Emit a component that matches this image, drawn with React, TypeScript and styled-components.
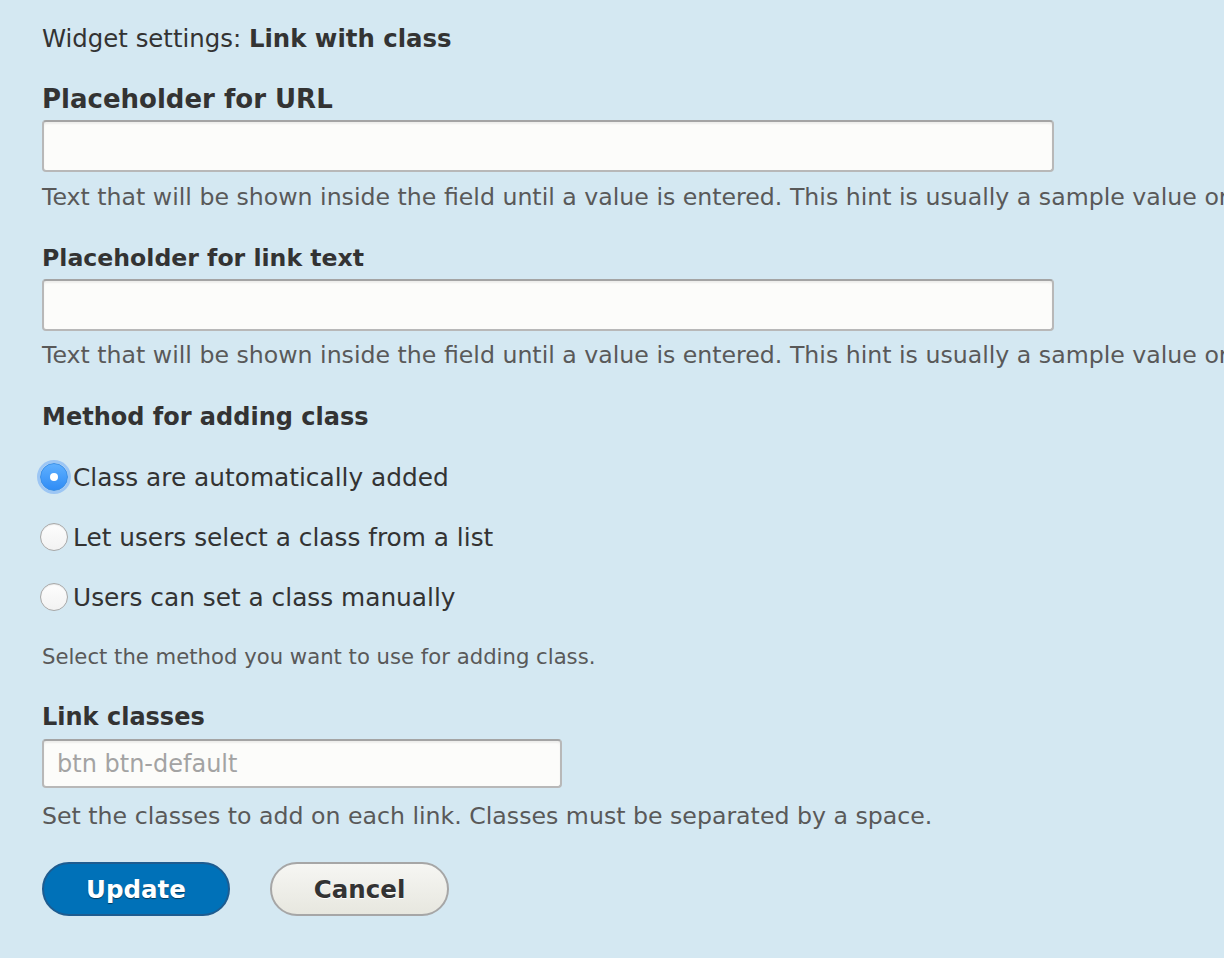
import React from "react";
import styled, { createGlobalStyle } from "styled-components";

const Global = createGlobalStyle`
  html, body { margin: 0; padding: 0; background: #d4e8f2; }
  body { font-family: "DejaVu Sans", Verdana, sans-serif; color: #333; }
  * { box-sizing: border-box; }
`;

const Page = styled.form`
  width: 1224px;
  height: 958px;
  overflow: hidden;
  background: #d4e8f2;
  padding: 24px 0 0 42px;
  display: flex;
  flex-direction: column;
`;

const Title = styled.div`
  font-size: 24.4px;
  line-height: 30px;
  white-space: nowrap;
  b { font-weight: bold; }
`;

const Item = styled.div<{ $mt: number }>`
  margin-top: ${(p) => p.$mt}px;
  display: flex;
  flex-direction: column;
`;

const Label = styled.label<{ $size?: number }>`
  font-size: ${(p) => p.$size ?? 24}px;
  font-weight: bold;
  line-height: 30px;
  white-space: nowrap;
`;

const Input = styled.input<{ $w: number; $h: number; $mt?: number }>`
  width: ${(p) => p.$w}px;
  height: ${(p) => p.$h}px;
  margin-top: ${(p) => p.$mt ?? 6}px;
  border: 2px solid #b8b8b8;
  border-top-color: #a4a4a4;
  border-radius: 4px;
  background: #fcfcfa;
  box-shadow: inset 0 2px 2px rgba(0, 0, 0, 0.06);
  font-family: inherit;
  font-size: 24px;
  padding: 0 13px;
  color: #333;
  outline: none;
  &::placeholder { color: #a3a3a3; }
`;

const Desc = styled.div<{ $size?: number; $mt?: number }>`
  font-size: ${(p) => p.$size ?? 23.65}px;
  line-height: 30px;
  color: #595959;
  margin-top: ${(p) => p.$mt ?? 10}px;
  white-space: nowrap;
`;

const RadioList = styled.div`
  display: flex;
  flex-direction: column;
  margin-top: 30px;
  gap: 30px;
`;

const RadioRow = styled.label`
  display: flex;
  align-items: center;
  height: 30px;
  margin-left: -2px;
  gap: 5px;
  font-size: 24.8px;
  color: #333;
  white-space: nowrap;
`;

const RadioDot = styled.span<{ $on?: boolean }>`
  width: 28px;
  height: 28px;
  border-radius: 50%;
  flex: none;
  display: flex;
  align-items: center;
  justify-content: center;
  ${(p) =>
    p.$on
      ? `
    background: linear-gradient(#5fb0ff, #2f8cf5);
    border: 1px solid #3a8ee6;
    box-shadow: 0 0 0 3px rgba(110, 170, 245, 0.55);
    &::after { content: ""; width: 8px; height: 8px; border-radius: 50%; background: #fff; }
  `
      : `
    background: linear-gradient(#fdfdfd, #f2f2f2);
    border: 1px solid #a8a8a8;
    box-shadow: inset 0 1px 1px rgba(0,0,0,0.08);
  `}
`;

const Buttons = styled.div`
  display: flex;
  gap: 40px;
  margin-top: 31px;
`;

const Button = styled.button<{ $primary?: boolean }>`
  height: 54px;
  padding: 0 42px;
  border-radius: 27px;
  font-family: inherit;
  font-size: 24.5px;
  font-weight: bold;
  cursor: pointer;
  ${(p) =>
    p.$primary
      ? `
    background: #0071b8;
    border: 2px solid #1e5c90;
    color: #fff;
    text-shadow: 0 1px 1px rgba(0,0,0,0.5);
  `
      : `
    background: linear-gradient(#f6f6f3, #e7e7df);
    border: 2px solid #a6a6a6;
    color: #333;
    text-shadow: 0 1px 0 #fff;
  `}
`;

const hint =
  "Text that will be shown inside the field until a value is entered. This hint is usually a sample value or a brief description of the expected format.";

export default function App() {
  return (
    <>
      <Global />
      <Page onSubmit={(e) => e.preventDefault()}>
        <Title>
          Widget settings: <b>Link with class</b>
        </Title>

        <Item $mt={30}>
          <Label $size={26}>Placeholder for URL</Label>
          <Input $w={1012} $h={52} type="text" />
          <Desc>{hint}</Desc>
        </Item>

        <Item $mt={31}>
          <Label $size={23.6}>Placeholder for link text</Label>
          <Input $w={1012} $h={52} type="text" />
          <Desc $mt={9}>{hint}</Desc>
        </Item>

        <Item $mt={32}>
          <Label>Method for adding class</Label>
          <RadioList>
            <RadioRow>
              <RadioDot $on />
              Class are automatically added
            </RadioRow>
            <RadioRow>
              <RadioDot />
              Let users select a class from a list
            </RadioRow>
            <RadioRow>
              <RadioDot />
              Users can set a class manually
            </RadioRow>
          </RadioList>
          <Desc $size={21.2} $mt={30}>
            Select the method you want to use for adding class.
          </Desc>
        </Item>

        <Item $mt={30}>
          <Label>Link classes</Label>
          <Input $w={520} $h={49} $mt={7} type="text" placeholder="btn btn-default" />
          <Desc $mt={13}>Set the classes to add on each link. Classes must be separated by a space.</Desc>
        </Item>

        <Buttons>
          <Button $primary type="submit">Update</Button>
          <Button type="button">Cancel</Button>
        </Buttons>
      </Page>
    </>
  );
}
